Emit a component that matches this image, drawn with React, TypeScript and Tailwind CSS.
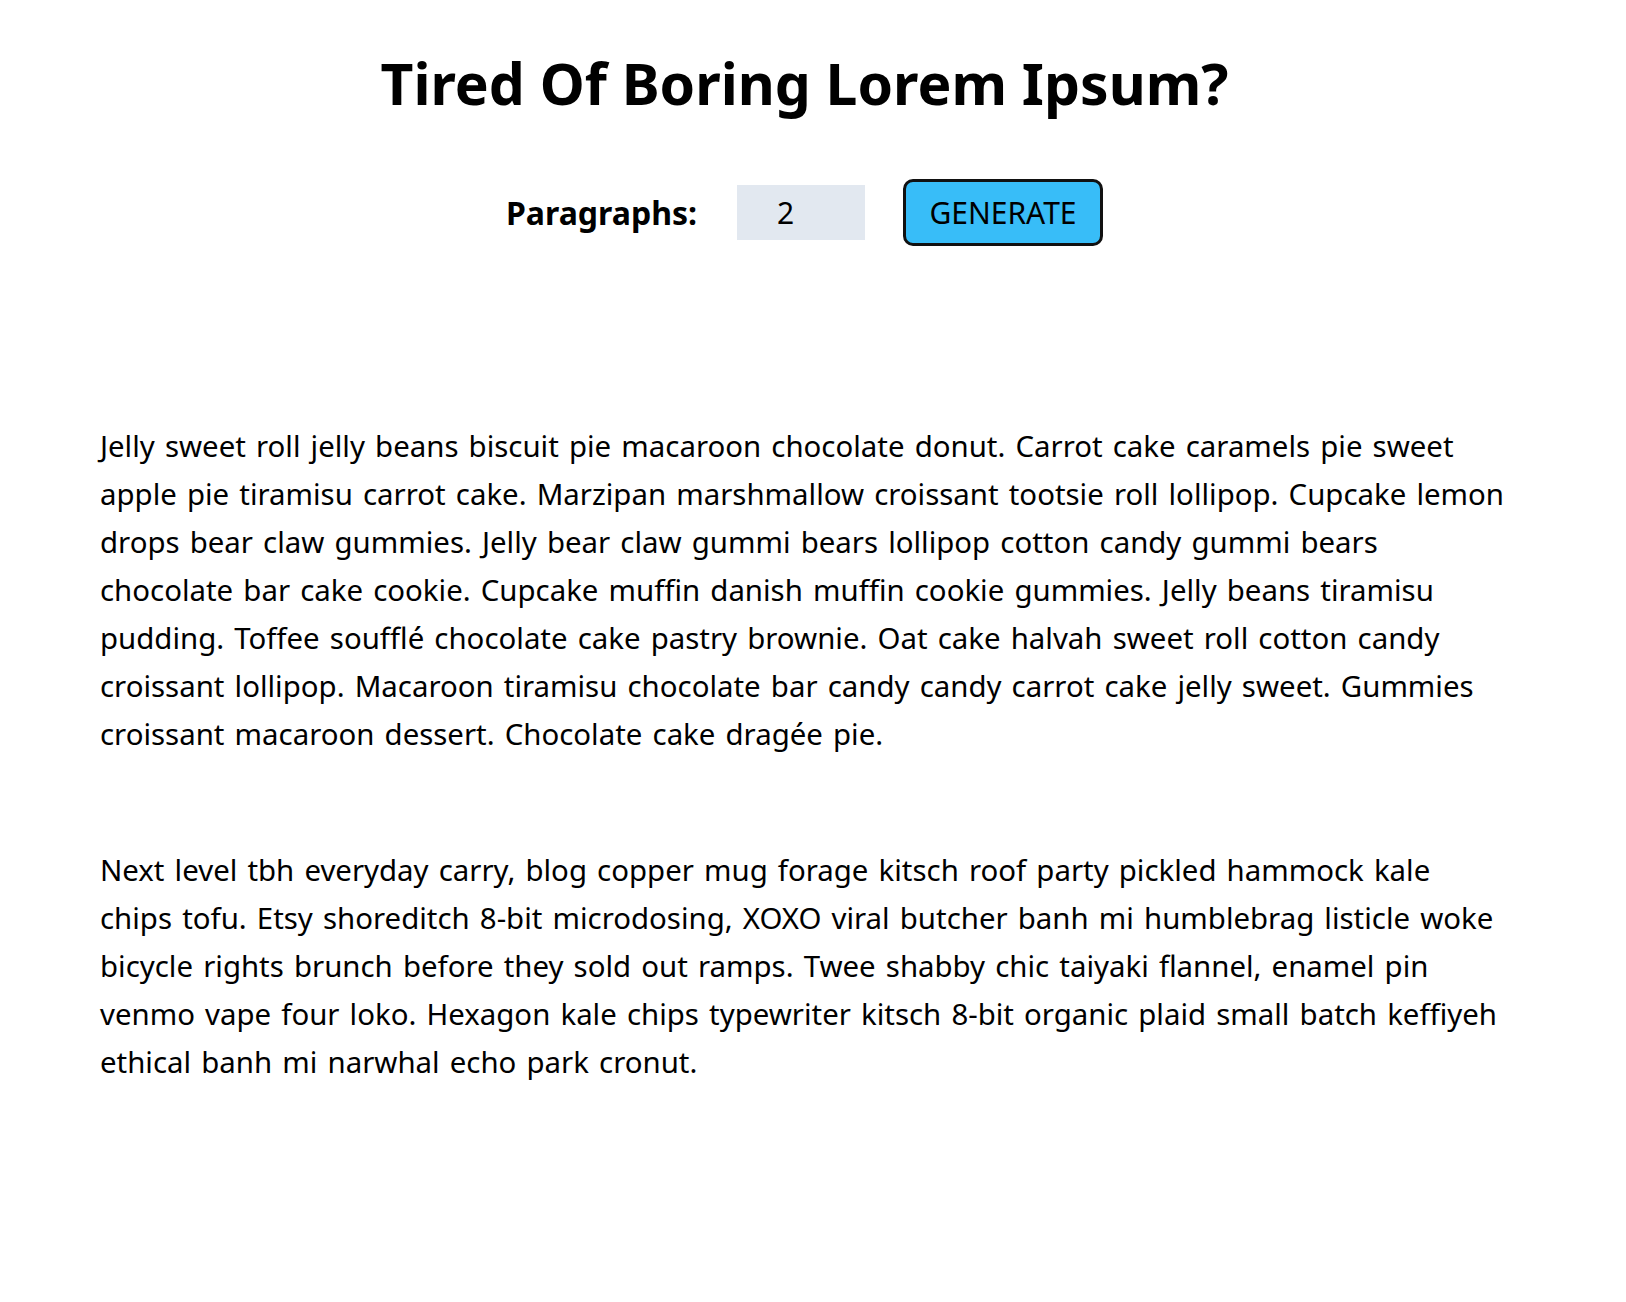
import { useState, type FormEvent } from 'react';

const text = [
  'Jelly sweet roll jelly beans biscuit pie macaroon chocolate donut. Carrot cake caramels pie sweet apple pie tiramisu carrot cake. Marzipan marshmallow croissant tootsie roll lollipop. Cupcake lemon drops bear claw gummies. Jelly bear claw gummi bears lollipop cotton candy gummi bears chocolate bar cake cookie. Cupcake muffin danish muffin cookie gummies. Jelly beans tiramisu pudding. Toffee soufflé chocolate cake pastry brownie. Oat cake halvah sweet roll cotton candy croissant lollipop. Macaroon tiramisu chocolate bar candy candy carrot cake jelly sweet. Gummies croissant macaroon dessert. Chocolate cake dragée pie.',
  'Next level tbh everyday carry, blog copper mug forage kitsch roof party pickled hammock kale chips tofu. Etsy shoreditch 8-bit microdosing, XOXO viral butcher banh mi humblebrag listicle woke bicycle rights brunch before they sold out ramps. Twee shabby chic taiyaki flannel, enamel pin venmo vape four loko. Hexagon kale chips typewriter kitsch 8-bit organic plaid small batch keffiyeh ethical banh mi narwhal echo park cronut.',
  'Cupcake ipsum dolor sit amet sweet roll. Lemon drops tart gingerbread chupa chups jelly-o halvah. Sugar plum wafer brownie topping marzipan icing cotton candy.',
];

export default function App() {
  const [count, setCount] = useState(2);
  const [shown, setShown] = useState(text.slice(0, 2));

  function handleSubmit(e: FormEvent) {
    e.preventDefault();
    let n = count;
    if (n <= 0) n = 1;
    if (n > text.length) n = text.length;
    setShown(text.slice(0, n));
  }

  return (
    <main className="min-h-screen bg-white pt-[55px] pr-[17px] text-black" style={{ fontFamily: '"Noto Sans", "Open Sans", sans-serif' }}>
      <h1 className="text-center text-[57px] font-bold leading-[57px]">Tired Of Boring Lorem Ipsum?</h1>
      <form onSubmit={handleSubmit} className="mt-[67px] flex items-center justify-center">
        <label htmlFor="amount" className="mr-[40px] text-[32px] font-bold">Paragraphs:</label>
        <input
          id="amount"
          type="number"
          value={count}
          onChange={(e) => setCount(Number(e.target.value))}
          className="mr-[38px] h-[55px] w-[128px] bg-[#e2e8f0] pl-[40px] text-[30px] outline-none [appearance:textfield]"
        />
        <button type="submit" className="h-[67px] w-[200px] rounded-[10px] border-[3px] border-[#111] bg-[#38bdf8] text-[30px]">
          GENERATE
        </button>
      </form>
      <article className="mt-[176px] pl-[100px] pr-[102px] text-[29.4px] leading-[48px] [word-spacing:2.5px]">
        {shown.map((p, i) => (
          <p key={i} className={i > 0 ? 'mt-[88px]' : ''}>{p}</p>
        ))}
      </article>
    </main>
  );
}
